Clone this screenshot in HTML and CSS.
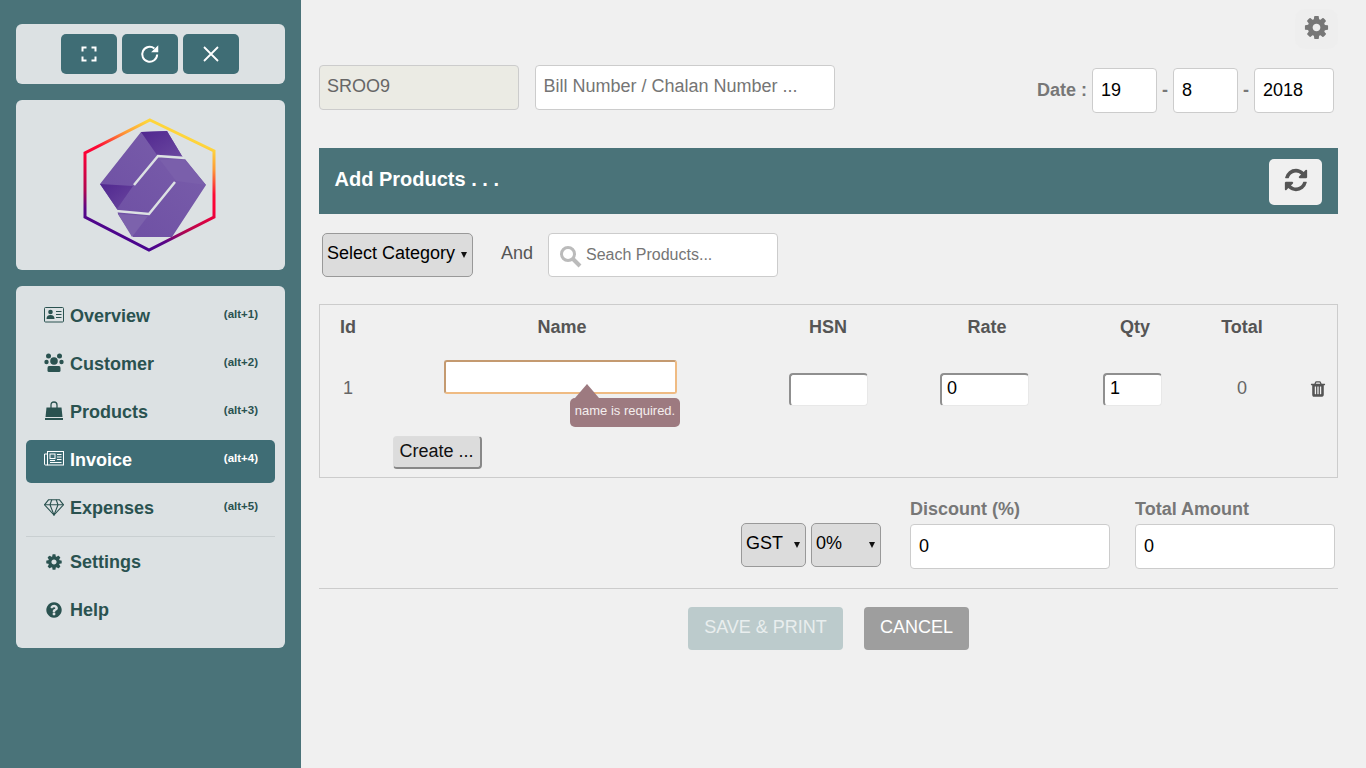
FILE: index.html
```html
<!DOCTYPE html>
<html lang="en">
<head>
    <meta charset="UTF-8">
    <title>Invoice</title>
    <link rel="stylesheet" href="styles.css">
</head>
<body>

<div class="sidebar">
    <div class="card window-controls">
        <button class="win-btn">
            <svg width="20" height="20" viewBox="0 0 20 20" fill="none" stroke="#fff" stroke-width="2"><path d="M3.500 7.500V3.500H7.500M12.500 3.500H16.500V7.500M16.500 12.500V16.500H12.500M7.500 16.500H3.500V12.500"/></svg>
        </button>
        <button class="win-btn">
            <svg width="22" height="22" viewBox="0 0 20 20" fill="none" stroke="#fff" stroke-width="1.800"><path d="M16.500 10.500A6.800 6.800 0 1 1 14 5"/><path d="M17.500 2v6.500H11z" fill="#fff" stroke="none"/></svg>
        </button>
        <button class="win-btn">
            <svg width="20" height="20" viewBox="0 0 20 20" fill="none" stroke="#fff" stroke-width="1.800"><path d="M3 3L17 17M17 3L3 17"/></svg>
        </button>
    </div>

    <div class="card logo-card">
        <svg width="160" height="150" viewBox="0 0 160 150">
            <defs>
                <linearGradient id="ring" gradientUnits="userSpaceOnUse" x1="50" y1="130" x2="100" y2="10">
                    <stop offset="0" stop-color="#47058f"/>
                    <stop offset="0.12" stop-color="#5a0687"/>
                    <stop offset="0.25" stop-color="#b00650"/>
                    <stop offset="0.5" stop-color="#fb0036"/>
                    <stop offset="0.6" stop-color="#fd0a35"/>
                    <stop offset="0.78" stop-color="#fe9a36"/>
                    <stop offset="0.92" stop-color="#fed53c"/>
                </linearGradient>
                <linearGradient id="dark" x1="0" y1="0" x2="1" y2="1">
                    <stop offset="0" stop-color="#50278f"/>
                    <stop offset="1" stop-color="#6a479f"/>
                </linearGradient>
                <linearGradient id="light" x1="0" y1="1" x2="1" y2="0">
                    <stop offset="0" stop-color="#6d4ea3"/>
                    <stop offset="1" stop-color="#7a5fab"/>
                </linearGradient>
            </defs>
            <polygon points="80,10 144,41 144,107 79,140 15,107 15,43" fill="none" stroke="url(#ring)" stroke-width="3"/>
            <polygon points="30,74 71,22 97,21 112,46 115,49 136,75 102,127 63,127 48,104 47,99" fill="url(#light)"/>
            <polygon points="71,22 97,21 112,46 87,45" fill="url(#dark)"/>
            <polygon points="30,74 63,76 47,99" fill="url(#dark)"/>
            <polygon points="90,50 115,50 136,75 106,71" fill="#7a5fab"/>
            <polygon points="48,104 78,106 62,127" fill="#7c62ac"/>
            <polyline points="115,48 88,46 64,75" fill="none" stroke="#dce1e3" stroke-width="2.500"/>
            <polyline points="105,72 79,104 46,101" fill="none" stroke="#dce1e3" stroke-width="2.500"/>
        </svg>
    </div>

    <div class="card menu">
        <a class="menu-item">
            <svg class="menu-icon" width="20" height="16" viewBox="0 0 20 16"><rect x="0.500" y="0.500" width="19" height="14.500" rx="1" fill="none" stroke="#2a5250"/><circle cx="6.500" cy="5" r="2.300" fill="#2a5250"/><path d="M2.500 12q0-4 4-4t4 4z" fill="#2a5250"/><path d="M12 4.500h5.500M12 7.500h5.500M12 10.500h5.500" stroke="#2a5250" stroke-width="1.200"/></svg>
            <span class="menu-label">Overview</span>
            <span class="menu-key">(alt+1)</span>
        </a>
        <a class="menu-item">
            <svg class="menu-icon icon-up" width="20" height="20" viewBox="0 0 20 20" fill="#2a5250"><circle cx="4.500" cy="3" r="2.500"/><circle cx="15.500" cy="3" r="2.500"/><circle cx="2.500" cy="9" r="2.200"/><circle cx="17.500" cy="9" r="2.200"/><circle cx="10" cy="8" r="3.800"/><path d="M5 13h10q1.500 0 1.500 2v2.500q0 1.500-1.500 1.500H5q-1.500 0-1.500-1.500V15Q3.500 13 5 13z"/></svg>
            <span class="menu-label">Customer</span>
            <span class="menu-key">(alt+2)</span>
        </a>
        <a class="menu-item">
            <svg class="menu-icon icon-up" width="20" height="20" viewBox="0 0 20 20"><path d="M2.500 6.500h15l1 9.500h-17z" fill="#2a5250"/><path d="M7 8V4q0-3 3-3t3 3v4" fill="none" stroke="#2a5250" stroke-width="1.300"/><rect x="1" y="17" width="18" height="2" fill="#2a5250"/></svg>
            <span class="menu-label">Products</span>
            <span class="menu-key">(alt+3)</span>
        </a>
        <a class="menu-item active">
            <svg class="menu-icon" width="20" height="16" viewBox="0 0 20 16" fill="none" stroke="#fff"><rect x="3.500" y="0.500" width="16" height="13.500"/><path d="M3.500 14H1.500q-1 0-1-1V3h3"/><rect x="6" y="3" width="5" height="4.500"/><path d="M13 3.500h4.500M13 6h4.500M13 8.500h4.500M6 9.500h5M6 11.500h11.500" stroke-width="1.200"/></svg>
            <span class="menu-label">Invoice</span>
            <span class="menu-key">(alt+4)</span>
        </a>
        <a class="menu-item">
            <svg class="menu-icon" width="20" height="17" viewBox="0 0 20 17" fill="none" stroke="#2a5250" stroke-width="1.100"><path d="M4.500 0.800h11l4 5L10 16 0.500 5.800z"/><path d="M0.500 5.800h19M6 5.800L10 16l4-10.200M6 5.800l1.800-5M14 5.800l-1.800-5"/></svg>
            <span class="menu-label">Expenses</span>
            <span class="menu-key">(alt+5)</span>
        </a>
        <div class="menu-divider"></div>
        <a class="menu-item">
            <svg class="menu-icon" width="20" height="18" viewBox="0 0 1792 1792" fill="#2a5250"><path d="M1152 896q0-106-75-181t-181-75-181 75-75 181 75 181 181 75 181-75 75-181zm512-109v222q0 12-8 23t-20 13l-185 28q-19 54-39 91 35 50 107 138 10 12 10 25t-9 23q-27 37-99 108t-94 71q-12 0-26-9l-138-108q-44 23-91 38-16 136-29 186-7 28-36 28h-222q-14 0-24.500-8.500t-11.500-21.500l-28-184q-49-16-90-37l-141 107q-10 9-25 9-14 0-25-11-126-114-165-168-7-10-7-23 0-12 8-23 15-21 51-66.500t54-70.500q-27-50-41-99l-183-27q-13-2-21-12.500t-8-23.500v-222q0-12 8-23t19-13l186-28q14-46 39-92-40-57-107-138-10-12-10-24 0-10 9-23 26-36 98.500-107.500t94.500-71.500q13 0 26 10l138 107q44-23 91-38 16-136 29-186 7-28 36-28h222q14 0 24.500 8.500t11.500 21.500l28 184q49 16 90 37l142-107q9-9 24-9 13 0 25 10 129 119 165 170 7 8 7 22 0 12-8 23-15 21-51 66.500t-54 70.500q26 50 41 98l183 28q13 2 21 12.500t8 23.500z"/></svg>
            <span class="menu-label">Settings</span>
        </a>
        <a class="menu-item">
            <svg class="menu-icon" width="20" height="18" viewBox="0 0 1792 1792" fill="#2a5250"><path d="M1024 1376v-192q0-14-9-23t-23-9h-192q-14 0-23 9t-9 23v192q0 14 9 23t23 9h192q14 0 23-9t9-23zm256-672q0-88-55.500-163t-138.500-116-170-41q-243 0-371 213-15 24 8 42l132 100q7 6 19 6 16 0 25-12 53-68 86-92 34-24 86-24 48 0 85.500 26t37.500 59q0 38-20 61t-68 45q-63 28-115.500 86.500t-52.500 125.500v36q0 14 9 23t23 9h192q14 0 23-9t9-23q0-19 21.500-49.500t54.500-49.500q32-18 49-28.500t46-35 44.500-48 28-60.500 12.500-81zm384 192q0 209-103 385.500t-279.500 279.500-385.500 103-385.500-103-279.500-279.500-103-385.500 103-385.500 279.500-279.500 385.500-103 385.500 103 279.500 279.500 103 385.500z"/></svg>
            <span class="menu-label">Help</span>
        </a>
    </div>
</div>

<div class="main">
    <div class="top-bar">
        <button class="settings-btn">
            <svg width="27" height="27" viewBox="0 0 1792 1792" fill="#777"><path d="M1152 896q0-106-75-181t-181-75-181 75-75 181 75 181 181 75 181-75 75-181zm512-109v222q0 12-8 23t-20 13l-185 28q-19 54-39 91 35 50 107 138 10 12 10 25t-9 23q-27 37-99 108t-94 71q-12 0-26-9l-138-108q-44 23-91 38-16 136-29 186-7 28-36 28h-222q-14 0-24.500-8.500t-11.500-21.500l-28-184q-49-16-90-37l-141 107q-10 9-25 9-14 0-25-11-126-114-165-168-7-10-7-23 0-12 8-23 15-21 51-66.500t54-70.500q-27-50-41-99l-183-27q-13-2-21-12.500t-8-23.500v-222q0-12 8-23t19-13l186-28q14-46 39-92-40-57-107-138-10-12-10-24 0-10 9-23 26-36 98.500-107.500t94.500-71.500q13 0 26 10l138 107q44-23 91-38 16-136 29-186 7-28 36-28h222q14 0 24.500 8.500t11.500 21.500l28 184q49 16 90 37l142-107q9-9 24-9 13 0 25 10 129 119 165 170 7 8 7 22 0 12-8 23-15 21-51 66.500t-54 70.500q26 50 41 98l183 28q13 2 21 12.500t8 23.500z"/></svg>
        </button>
    </div>

    <div class="bill-row">
        <input class="field field-readonly" type="text" value="SROO9" readonly>
        <input class="field field-bill" type="text" placeholder="Bill Number / Chalan Number ...">
        <div class="date-group">
            <span class="date-label">Date :</span>
            <input class="field date-input" type="text" value="19">
            <span class="date-sep">-</span>
            <input class="field date-input" type="text" value="8">
            <span class="date-sep">-</span>
            <input class="field date-input date-year" type="text" value="2018">
        </div>
    </div>

    <div class="band">
        <span class="band-title">Add Products . . .</span>
        <button class="band-btn">
            <svg width="26" height="26" viewBox="0 0 1792 1792" fill="#555"><path d="M1639 1056q0 5-1 7-64 268-268 434.500t-478 166.500q-146 0-282.500-55t-243.500-157l-129 129q-19 19-45 19t-45-19-19-45v-448q0-26 19-45t45-19h448q26 0 45 19t19 45-19 45l-137 137q71 66 161 102t187 36q134 0 250-65t186-179q11-17 53-117 8-23 30-23h192q13 0 22.500 9.500t9.500 22.500zm25-800v448q0 26-19 45t-45 19h-448q-26 0-45-19t-19-45 19-45l138-138q-148-137-349-137-134 0-250 65t-186 179q-11 17-53 117-8 23-30 23h-199q-13 0-22.500-9.500t-9.500-22.500v-7q65-268 270-434.500t480-166.500q146 0 284 55.500t245 156.500l130-129q19-19 45-19t45 19 19 45z"/></svg>
        </button>
    </div>

    <div class="filter-row">
        <div class="select-wrap category-wrap">
            <select class="select">
                <option>Select Category</option>
            </select>
        </div>
        <span class="and-label">And</span>
        <div class="search-wrap">
            <svg class="search-icon" width="24" height="24" viewBox="0 0 24 24" fill="none" stroke="#bbb"><circle cx="10" cy="10" r="6.500" stroke-width="3"/><path d="M15 15l7 7" stroke-width="4"/></svg>
            <input class="field search-input" type="text" placeholder="Seach Products...">
        </div>
    </div>

    <div class="product-table">
        <div class="cell head">Id</div>
        <div class="cell head">Name</div>
        <div class="cell head">HSN</div>
        <div class="cell head">Rate</div>
        <div class="cell head">Qty</div>
        <div class="cell head">Total</div>
        <div class="cell head"></div>

        <div class="cell row-text row-id">1</div>
        <div class="cell name-cell">
            <div class="name-wrap">
                <input class="cell-input name-input" type="text">
                <div class="tooltip">name is required.</div>
            </div>
        </div>
        <div class="cell"><input class="cell-input hsn-input" type="text"></div>
        <div class="cell"><input class="cell-input rate-input" type="text" value="0"></div>
        <div class="cell"><input class="cell-input qty-input" type="text" value="1"></div>
        <div class="cell row-text row-total">0</div>
        <div class="cell trash-cell">
            <svg width="18" height="18" viewBox="0 0 1792 1792" fill="#555"><path d="M704 1376v-704q0-14-9-23t-23-9h-64q-14 0-23 9t-9 23v704q0 14 9 23t23 9h64q14 0 23-9t9-23zm256 0v-704q0-14-9-23t-23-9h-64q-14 0-23 9t-9 23v704q0 14 9 23t23 9h64q14 0 23-9t9-23zm256 0v-704q0-14-9-23t-23-9h-64q-14 0-23 9t-9 23v704q0 14 9 23t23 9h64q14 0 23-9t9-23zm-544-992h448l-48-117q-7-9-17-11h-317q-10 2-17 11zm928 32v64q0 14-9 23t-23 9h-96v948q0 83-47 143.500t-113 60.500h-832q-66 0-113-58.500t-47-141.500v-952h-96q-14 0-23-9t-9-23v-64q0-14 9-23t23-9h309l70-167q15-37 54-63t79-26h320q40 0 79 26t54 63l70 167h309q14 0 23 9t9 23z"/></svg>
        </div>

        <div class="cell"></div>
        <div class="cell create-cell"><button class="create-btn">Create ...</button></div>
    </div>

    <div class="totals">
        <div class="select-wrap gst-wrap">
            <select class="select"><option>GST</option></select>
        </div>
        <div class="select-wrap rate-wrap">
            <select class="select"><option>0%</option></select>
        </div>
        <div class="total-field discount-field">
            <label class="total-label">Discount (%)</label>
            <input class="field total-input" type="text" value="0">
        </div>
        <div class="total-field">
            <label class="total-label">Total Amount</label>
            <input class="field total-input" type="text" value="0">
        </div>
    </div>

    <hr class="rule">

    <div class="actions">
        <button class="action-btn save-btn">SAVE &amp; PRINT</button>
        <button class="action-btn cancel-btn">CANCEL</button>
    </div>
</div>

</body>
</html>
```

FILE: styles.css
```css
/* Base */
* {
    box-sizing: border-box;
}
body {
    margin: 0;
    height: 768px;
    overflow: hidden;
    display: flex;
    font-family: "Liberation Sans", Arial, sans-serif;
    font-size: 18px;
    background-color: #f0f0f0;
    color: #555;
}
button {
    font-family: inherit;
    cursor: pointer;
}

/* Sidebar */
.sidebar {
    width: 301px;
    flex-shrink: 0;
    padding: 24px 16px;
    display: flex;
    flex-direction: column;
    gap: 16px;
    background-color: #4a7379;
}
.card {
    background-color: #dce1e3;
    border-radius: 6px;
}
.window-controls {
    height: 60px;
    padding-right: 2px;
    display: flex;
    justify-content: center;
    align-items: center;
    gap: 5px;
}
.win-btn {
    width: 56px;
    height: 40px;
    padding: 0;
    border: none;
    border-radius: 5px;
    display: flex;
    align-items: center;
    justify-content: center;
    background-color: #3f6d75;
}
.logo-card {
    height: 170px;
    padding: 10px 2px 0 0;
    display: flex;
    justify-content: center;
    align-items: flex-start;
}
.menu {
    padding: 10px;
    height: 362px;
}
.menu-item {
    height: 43px;
    margin-bottom: 5px;
    padding: 9px 17px 0 18px;
    display: flex;
    align-items: flex-start;
    border-radius: 5px;
    color: #2a5250;
    font-weight: bold;
    line-height: 22px;
}
.menu-item.active {
    background-color: #3f6d75;
    color: #fff;
}
.menu-icon {
    width: 20px;
    margin-right: 6px;
    align-self: flex-start;
    margin-top: 2px;
}
.menu-icon.icon-up {
    margin-top: 0;
}
.menu-label {
    flex: 1;
}
.menu-key {
    font-size: 11.5px;
    line-height: 18px;
}
.menu-divider {
    height: 1px;
    margin-bottom: 5px;
    background-color: #c9cfd1;
}

/* Main column */
.main {
    flex: 1;
    padding: 0 28px 0 18px;
}
.top-bar {
    height: 49px;
    padding-top: 9px;
    display: flex;
    justify-content: flex-end;
}
.settings-btn {
    width: 43px;
    height: 40px;
    padding: 0 1px 4px 0;
    border: none;
    border-radius: 10px;
    display: flex;
    align-items: center;
    justify-content: center;
    background-color: #eeeeee;
}
.field {
    height: 45px;
    padding: 0 8px;
    border: 1px solid #ccc;
    border-radius: 4px;
    font-family: inherit;
    font-size: 18px;
    color: #000;
    background-color: #fff;
}
.field::placeholder {
    color: #757575;
}
.bill-row {
    height: 48px;
    margin-top: 16px;
    display: flex;
    align-items: flex-start;
}
.field-readonly {
    width: 200px;
    margin-right: 16px;
    padding: 0 7px 2px;
    background-color: #ebebe4;
    color: #666;
}
.field-bill {
    width: 300px;
    padding: 0 8px 2px 7.5px;
}
.date-group {
    margin: 3px 4px 0 auto;
    display: flex;
    align-items: center;
    color: #777;
    font-weight: bold;
}
.date-label {
    margin-right: 5px;
}
.date-input {
    width: 65px;
    font-weight: normal;
}
.date-year {
    width: 80px;
}
.date-sep {
    width: 16px;
    text-align: center;
}

/* Add products band */
.band {
    height: 66px;
    margin-top: 35px;
    padding: 11px 16px 0 15.5px;
    display: flex;
    justify-content: space-between;
    align-items: flex-start;
    background-color: #4a7379;
}
.band-title {
    margin-top: 9px;
    color: #fff;
    font-size: 20px;
    font-weight: bold;
}
.band-btn {
    width: 53px;
    height: 46px;
    padding: 0 0 5px;
    border: none;
    border-radius: 5px;
    display: flex;
    align-items: center;
    justify-content: center;
    background-color: #f0f0f0;
}

/* Filters */
.filter-row {
    height: 44px;
    margin-top: 19px;
    padding-left: 3px;
    display: flex;
    align-items: flex-start;
}
.select-wrap {
    position: relative;
    height: 44px;
}
.select-wrap::after {
    content: "";
    position: absolute;
    top: 19px;
    right: 6px;
    border-left: 3px solid transparent;
    border-right: 3px solid transparent;
    border-top: 6px solid #111;
}
.select {
    width: 100%;
    height: 100%;
    padding: 0 0 4px 4px;
    border: 1px solid #999;
    border-radius: 5px;
    appearance: none;
    font-family: inherit;
    font-size: 18px;
    color: #000;
    background-color: #dcdcdc;
}
.category-wrap {
    width: 151px;
}
.and-label {
    width: 32px;
    margin: 10px 15px 0 28px;
}
.search-wrap {
    position: relative;
    width: 230px;
}
.search-icon {
    position: absolute;
    top: 11px;
    left: 10px;
}
.search-input {
    width: 100%;
    height: 44px;
    padding-left: 37px;
    font-size: 16px;
}

/* Product table */
.product-table {
    height: 174px;
    margin-top: 27px;
    border: 1px solid #ccc;
    display: grid;
    grid-template-columns: 56px 372px 160px 158px 138px 76px 57px;
    grid-template-rows: 44px 87px 33px;
}
.cell {
    text-align: center;
}
.head {
    padding-top: 12px;
    font-weight: bold;
}
.row-text {
    padding-top: 29px;
}
.row-id {
    color: #666;
}
.row-total {
    color: #666;
}
.cell-input {
    height: 33px;
    margin-top: 24px;
    padding: 0 5px 3px 5px;
    border-width: 2px 1px 1px 2px;
    border-style: solid;
    border-color: #8f8f8f #e8e8e8 #e8e8e8 #8f8f8f;
    border-radius: 4px;
    font-family: inherit;
    font-size: 18px;
    color: #000;
    background-color: #fff;
    vertical-align: top;
}
.hsn-input {
    width: 79px;
}
.rate-input {
    width: 89px;
    margin-right: 5px;
}
.qty-input {
    width: 59px;
    margin-right: 5px;
}
.name-cell {
    text-align: left;
    padding-left: 68px;
}
.name-wrap {
    position: relative;
    width: 233px;
}
.name-input {
    width: 233px;
    height: 34px;
    margin-top: 11px;
    border: 2px solid #efbb83;
    border-top-color: #c49a70;
    border-left-color: #c49a70;
    border-radius: 3px;
    display: block;
}
.tooltip {
    position: absolute;
    top: 38px;
    left: 126px;
    width: 110px;
    height: 29px;
    border-radius: 5px;
    background-color: #9d7a80;
    color: #f4eeee;
    font-size: 13px;
    line-height: 26px;
    text-align: center;
}
.tooltip::before {
    content: "";
    position: absolute;
    top: -14px;
    left: 5px;
    border-left: 12px solid transparent;
    border-right: 12px solid transparent;
    border-bottom: 14px solid #9d7a80;
}
.trash-cell {
    padding: 31px 0 0 19px;
}
.create-cell {
    text-align: left;
    padding-left: 17px;
}
.create-btn {
    width: 89px;
    height: 33px;
    padding: 0 1px 2px 0;
    border-width: 1px 2px 2px 1px;
    border-style: solid;
    border-color: #ddd #888 #888 #ddd;
    border-radius: 4px;
    font-size: 18px;
    color: #111;
    background-color: #dcdcdc;
}

/* Totals */
.totals {
    height: 89px;
    margin-top: 21px;
    padding-right: 3px;
    display: flex;
    justify-content: flex-end;
    align-items: flex-start;
}
.gst-wrap {
    width: 65px;
    margin: 24px 5px 0 0;
}
.rate-wrap {
    width: 70px;
    margin: 24px 29px 0 0;
}
.total-field {
    width: 200px;
}
.discount-field {
    margin-right: 25px;
}
.total-label {
    display: block;
    height: 25px;
    line-height: 20px;
    color: #777;
    font-weight: bold;
}
.total-input {
    width: 200px;
}
.rule {
    height: 1px;
    margin: 0;
    border: none;
    background-color: #ccc;
}
.actions {
    margin-top: 18px;
    display: flex;
    justify-content: center;
    gap: 21px;
}
.action-btn {
    height: 43px;
    padding: 0 16px 2px;
    border: none;
    border-radius: 4px;
    font-size: 18px;
    color: #fff;
}
.save-btn {
    width: 155px;
    background-color: #bccbcc;
    color: #e9eeee;
}
.cancel-btn {
    width: 105px;
    background-color: #9e9e9e;
}
```
